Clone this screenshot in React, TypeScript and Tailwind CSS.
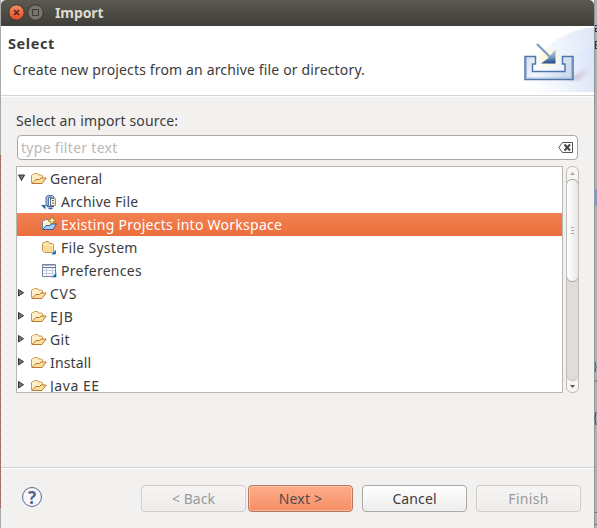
import type { ReactNode } from "react";

function FolderOpen() {
  return (
    <svg width="16" height="13" viewBox="0 0 16 13" fill="none" className="shrink-0">
      <path d="M.5 11V3.5L1.5 2.5H2.5L3.5 1.5H6.5L7.5 3H10.5L11.5 4V6" fill="#fdf0c8" stroke="#c9964c" />
      <path d="M.8 11.5L5 7.5H8.5L10 6H15.2L11 11.5Z" fill="#fbdf9c" stroke="#b9782f" strokeLinejoin="round" />
    </svg>
  );
}

function ArchiveIcon() {
  return (
    <svg width="17" height="16" viewBox="0 0 17 16" fill="none" className="shrink-0">
      <path d="M9.5 3.5H13L14.5 5V11.5H9.5Z" fill="#fff4c8" stroke="#a8915c" />
      <path d="M5 11.5V3L6.5 1.5H11.5L13 3V4.5H10.5V3.5H7.5V11.5Z" fill="#a9b9dc" stroke="#54709f" />
      <path d="M9.5 4V13M11 6.5H13M11 9H13.5" stroke="#52699a" />
      <path d="M6 12.5H13M7.5 14.5H11.5" stroke="#45639a" strokeWidth="1.3" />
      <path d="M0 11H4.5V15.5Z" fill="#126bab" />
    </svg>
  );
}

function ProjectIcon() {
  return (
    <svg width="17" height="16" viewBox="0 0 17 16" fill="none" className="shrink-0">
      <path d="M1.5 12V4.5L2.5 3.5H3.5L4.5 2.5H7L8 4H11.5V8" fill="#fff2cc" stroke="#6582aa" />
      <path d="M1.8 12.5L5 8.5H9L10 7H15.5L12 12.5Z" fill="#a9ccf2" stroke="#345f9b" strokeLinejoin="round" />
      <path d="M11 0V7M7.5 3.5H14.5" stroke="#a67c2c" strokeWidth="3" />
      <path d="M11 1V6M8.5 3.5H13.5" stroke="#fff3b4" strokeWidth="1.3" />
    </svg>
  );
}

function FileSystemIcon() {
  return (
    <svg width="17" height="16" viewBox="0 0 17 16" fill="none" className="shrink-0">
      <path d="M1.5 10.5V3.5L2.5 2.5H3.5L4.5 1.5H7.5L8.5 3.5H11.5L12.5 4.5V12.5H3.5Z" fill="#f9dc9c" stroke="#c9964c" />
      <path d="M2.5 4.5H8L9 5.5H12" stroke="#fff5cc" />
      <path d="M15 9.5V14.5H10Z" fill="#0869a9" stroke="#fff" strokeWidth=".4" />
    </svg>
  );
}

function PreferencesIcon() {
  return (
    <svg width="17" height="16" viewBox="0 0 17 16" fill="none" className="shrink-0">
      <path d="M1.5 1.5H14.5V13.5H1.5Z" fill="#f7faff" stroke="#7481a0" />
      <path d="M2 2.5H14" stroke="#b0bcd6" />
      <path d="M2 4.5H14" stroke="#68779a" />
      <path d="M2 7.5H14M2 10.5H14M5.5 5V13M11.5 5V13" stroke="#c3cfdf" />
      <path d="M15.5 9.5V14.5H10.5Z" fill="#0869a9" stroke="#fff" strokeWidth=".4" />
    </svg>
  );
}

function ImportBanner() {
  return (
    <svg width="78" height="66" viewBox="516 26 78 66" fill="none" className="shrink-0">
      <defs>
        <linearGradient id="sky" x1="532" y1="72" x2="598" y2="52" gradientUnits="userSpaceOnUse">
          <stop stopColor="#fff" /><stop offset="1" stopColor="#dfe7f8" />
        </linearGradient>
        <linearGradient id="floor" x1="520" y1="85" x2="594" y2="70" gradientUnits="userSpaceOnUse">
          <stop stopColor="#fff" stopOpacity="0" /><stop offset="1" stopColor="#dbe5f8" />
        </linearGradient>
        <linearGradient id="tray" x1="524" y1="55" x2="573" y2="80" gradientUnits="userSpaceOnUse">
          <stop stopColor="#d2dcef" /><stop offset=".35" stopColor="#f4f6fd" /><stop offset="1" stopColor="#c3d3ec" />
        </linearGradient>
        <linearGradient id="arrow" x1="549" y1="50" x2="551" y2="64" gradientUnits="userSpaceOnUse">
          <stop stopColor="#b9cfe6" /><stop offset=".5" stopColor="#7e9fc9" /><stop offset="1" stopColor="#163f83" />
        </linearGradient>
        <filter id="soft"><feGaussianBlur stdDeviation="2" /></filter>
      </defs>
      <path d="M520 92C533 55 555 31 594 27V92Z" fill="url(#sky)" />
      <path d="M520 92C542 84 556 56 594 47V92Z" fill="url(#floor)" opacity=".8" />
      <path d="M566 80L589 69L578 80Z" fill="#b5a3bc" opacity=".65" filter="url(#soft)" />
      <circle cx="549" cy="58" r="9" fill="#fff8c4" opacity=".6" filter="url(#soft)" />
      <path d="M525 56.5H535.5V64H532.5V71.5H565V64H562.5V56.5H573V79.5H525Z" fill="url(#tray)" stroke="#4f77aa" strokeWidth="1.5" />
      <path d="M526.5 58V78H571.5V58" stroke="#a6b9dc" />
      <path d="M537 44L551 58" stroke="#7f9fc2" strokeWidth="2.3" />
      <path d="M555.5 49.5V63.5H541L547 59L550 56Z" fill="url(#arrow)" />
    </svg>
  );
}

type RowProps = { icon?: ReactNode; text: string; track: string; level?: number; open?: boolean; selected?: boolean };

function TreeRow({ icon, text, track, level = 0, open, selected }: RowProps) {
  return (
    <div className={`flex h-[23px] shrink-0 items-center whitespace-pre ${selected ? "bg-gradient-to-b from-[#f28050] to-[#ec6f3d] text-white" : ""}`}>
      {level === 0 ? (
        <>
          <svg width="14" height="16" viewBox="0 0 14 16" className="shrink-0">
            {open ? <path d="M1.5 4H7.5L4.5 9.5Z" fill="#777" stroke="#333" /> : <path d="M1.5 3.5V10L6.5 6.7Z" fill="#777" stroke="#333" />}
          </svg>
          <FolderOpen />
          <span className={`ml-[3px] ${track}`}>{text}</span>
        </>
      ) : (
        <div className="ml-6 flex items-center gap-[3px]">{icon}<span className={track}>{text}</span></div>
      )}
    </div>
  );
}

function Button({ children, kind = "normal", className = "" }: { children: ReactNode; kind?: "normal" | "disabled" | "primary"; className?: string }) {
  const style = {
    normal: "border-[#aaa8a6] bg-gradient-to-b from-white to-[#edeceb] text-[#3c3c3c]",
    disabled: "border-[#cecbc8] bg-gradient-to-b from-[#f6f5f4] to-[#edeceb] text-[#999]",
    primary: "border-[#b77862] bg-gradient-to-b from-[#ffad8b] to-[#f58e65] text-[#4c4c4c]",
  }[kind];
  return <button className={`h-[27px] w-[105px] shrink-0 rounded-[4px] border shadow-[inset_0_0_0_1px_#ffffff55] ${style} ${className}`}>{children}</button>;
}

export default function App() {
  return (
    <div className="flex h-[528px] w-[597px] overflow-hidden bg-[#aaa] font-['Noto_Sans','Open_Sans',sans-serif] text-[14px] leading-[20px] text-[#3c3c3c]">
      <div className="flex w-px shrink-0 flex-col bg-[#aaa]">
        <div className="h-[155px]" />
        <div className="h-[353px] bg-[repeating-linear-gradient(to_bottom,#a34a3b_0_1px,#9b9890_1px_2px)]" />
      </div>
      <main className="flex w-[593px] shrink-0 flex-col bg-[#f2f1f0]">
        <header className="flex h-[26px] shrink-0 items-center rounded-t-[5px] bg-gradient-to-b from-[#5b5a52] to-[#3e3d38] text-[#dfdbd2]">
          <svg width="44" height="26" viewBox="1 0 44 26" fill="none">
            <defs><linearGradient id="close" x2="0" y2="1"><stop stopColor="#f88c69" /><stop offset="1" stopColor="#e04c22" /></linearGradient></defs>
            <circle cx="16.5" cy="12.5" r="7.7" fill="url(#close)" stroke="#37352f" />
            <path d="M14 10L19 15M19 10L14 15" stroke="#4c251b" strokeWidth="1.5" />
            <circle cx="35.5" cy="12.5" r="7.7" fill="#77756c" stroke="#37352f" />
            <path d="M32.5 9.5H38.5V15.5H32.5Z" stroke="#3d3b36" />
          </svg>
          <h1 className="ml-[10px] text-[14px] font-bold tracking-[-0.1px]">Import</h1>
        </header>
        <section className="flex h-[69px] shrink-0 justify-between bg-white">
          <div className="ml-[7px] mt-[7px]">
            <h2 className="text-[14.5px] font-bold tracking-[0.6px]">Select</h2>
            <p className="ml-[5px] mt-[7px] whitespace-pre tracking-[0.15px]">Create new projects from an archive file or directory.</p>
          </div>
          <ImportBanner />
        </section>
        <section className="h-[372px] shrink-0 border-t border-[#d6d4d2] pl-[15px] pt-[15px] shadow-[inset_0_1px_white]">
          <label className="block h-[24px] whitespace-pre tracking-[0.15px]">Select an import source:</label>
          <div className="ml-px flex h-[25px] w-[561px] items-center justify-between rounded-[4px] border border-[#aaa7a4] bg-white pl-[3px] pr-[4px] text-[#bcb8b5]">
            <span className="tracking-[0.3px]">type filter text</span>
            <svg width="15" height="11" viewBox="0 0 15 11" fill="none">
              <path d="M4.5 .5H14.5V10.5H4.5L.8 5.5Z" fill="#fff" stroke="#555" />
              <path d="M6.5 2.5L12 8.5M12 2.5L6.5 8.5" stroke="#444" strokeWidth="2" />
            </svg>
          </div>
          <div className="mt-[6px] flex h-[227px] gap-[3px]">
            <div className="flex w-[547px] shrink-0 flex-col overflow-hidden border border-[#b9b6b3] bg-white">
              <TreeRow text="General" track="tracking-[0.1px]" open />
              <TreeRow icon={<ArchiveIcon />} text="Archive File" track="tracking-[0.25px]" level={1} />
              <TreeRow icon={<ProjectIcon />} text="Existing Projects into Workspace" track="tracking-[0.26px]" level={1} selected />
              <TreeRow icon={<FileSystemIcon />} text="File System" track="tracking-[0.28px]" level={1} />
              <TreeRow icon={<PreferencesIcon />} text="Preferences" track="tracking-[0.27px]" level={1} />
              <TreeRow text="CVS" track="tracking-[0.7px]" />
              <TreeRow text="EJB" track="tracking-[0.7px]" />
              <TreeRow text="Git" track="tracking-[0.3px]" />
              <TreeRow text="Install" track="tracking-[0.15px]" />
              <TreeRow text="Java EE" track="tracking-[0.55px]" />
            </div>
            <div className="flex w-[13px] flex-col overflow-hidden rounded-[6px] border border-[#c1beba] bg-[#f7f6f5]">
              <svg width="11" height="12" className="shrink-0"><path d="M3 8H8L5.5 5Z" fill="#aaa" /></svg>
              <div className="flex min-h-0 flex-1 flex-col rounded-[6px] bg-[#dedddb] shadow-[0_1px_1px_#bbb]">
                <div className="-mx-px flex h-[103px] shrink-0 flex-col items-center justify-center gap-[2px] rounded-[6px] border border-[#aaa7a4] bg-gradient-to-r from-white to-[#e8e7e6]">
                  <i className="h-px w-[3px] bg-[#aaa]" /><i className="h-px w-[3px] bg-[#aaa]" /><i className="h-px w-[3px] bg-[#aaa]" />
                </div>
              </div>
              <svg width="11" height="12" className="shrink-0"><path d="M3 5H8L5.5 8Z" fill="#555" /></svg>
            </div>
          </div>
        </section>
        <footer className="flex h-[61px] shrink-0 border-t border-[#d6d4d2] pl-[21px] pt-[17px] shadow-[inset_0_1px_white]">
          <div className="mr-[99px] mt-[2px] flex h-5 w-5 shrink-0 items-center justify-center rounded-full border border-[#526b94] bg-[#f8f8fb] text-[17px] font-bold leading-none text-[#4e6590]">?</div>
          <Button kind="disabled">&lt; Back</Button>
          <Button kind="primary" className="ml-[2px] tracking-[0.2px]">Next &gt;</Button>
          <Button className="ml-[9px] tracking-[0.1px]">Cancel</Button>
          <Button kind="disabled" className="ml-[9px] tracking-[0.3px]">Finish</Button>
        </footer>
      </main>
      <svg width="3" height="528" className="shrink-0">
        <rect width="3" height="528" fill="#b0b0b0" /><path d="M.5 0V528" stroke="#969696" />
        <path d="M1 25.5H3M1 28.5H3M1.5 28V31M1 31.5H3M1.5 42V48M1 41.5H3M1 45H3M1 48.5H3" stroke="#303044" fill="none" />
        <path d="M0 189H3V206H0Z" fill="#8b99b5" /><path d="M1 362Q3 367 1 372" stroke="#167280" fill="none" />
        <path d="M1 381H3" stroke="#407b42" /><path d="M2 412Q0 419 2 425" stroke="#1c4d75" fill="none" />
        <path d="M0 512.5H3M0 524.5H3" stroke="#777" />
      </svg>
    </div>
  );
}
